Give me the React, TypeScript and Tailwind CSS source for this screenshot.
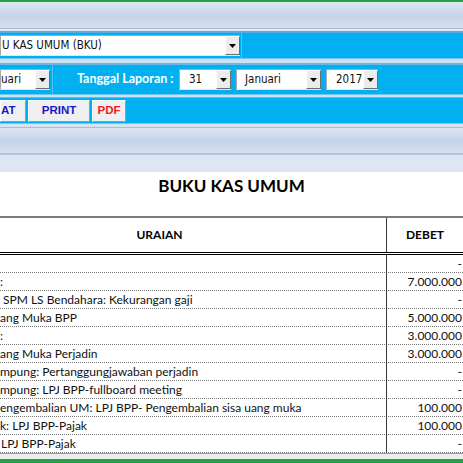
import React from "react";

const uiFont = { fontFamily: '"DejaVu Sans Condensed", "DejaVu Sans", sans-serif' };
const calFont = { fontFamily: 'Lato, "Open Sans", sans-serif' };

function Arrow() {
  return (
    <svg width="7" height="4" viewBox="0 0 7 4">
      <polygon points="0,0 7,0 3.5,4" fill="#000" />
    </svg>
  );
}

function Combo({ className, text, textClass }: { className: string; text: string; textClass?: string }) {
  return (
    <div className={`flex h-[21px] bg-white border-t border-l border-[#a9a9a9] border-b border-b-[#e6e6e6] ${className}`}>
      <div className={`flex-1 min-w-0 flex items-center whitespace-nowrap text-[11.5px] text-[#111] ${textClass ?? ""}`} style={uiFont}>
        {text}
      </div>
      <div className="w-[15px] shrink-0 h-full flex items-center justify-center bg-[#ececec] border-t border-l border-white border-r border-b border-r-[#6e6e6e] border-b-[#6e6e6e]">
        <Arrow />
      </div>
    </div>
  );
}

function Btn({ className, children, textClass }: { className: string; children: React.ReactNode; textClass: string }) {
  return (
    <div className={`h-[22px] flex items-center bg-[#efefef] border-t border-l border-[#fdfdfd] border-r border-b border-r-[#9a9a9a] border-b-[#9a9a9a] ${className}`}>
      <span className={`font-bold text-[11.5px] ${textClass}`} style={{ fontFamily: '"Liberation Sans", Arial, sans-serif' }}>
        {children}
      </span>
    </div>
  );
}

const rows: [string, string, string?][] = [
  ["", "-"],
  [":", "7.000.000"],
  ["SPM LS Bendahara: Kekurangan gaji", "-", "pl-[3px]"],
  ["ang Muka BPP", "5.000.000"],
  [":", "3.000.000"],
  ["ang Muka Perjadin", "3.000.000"],
  ["mpung: Pertanggungjawaban perjadin", "-"],
  ["mpung: LPJ BPP-fullboard meeting", "-"],
  ["engembalian UM: LPJ BPP- Pengembalian sisa uang muka", "100.000"],
  ["k: LPJ BPP-Pajak", "100.000"],
  ["LPJ BPP-Pajak", "-", "pl-[1px]"],
];

export default function App() {
  return (
    <div className="w-[463px] h-[463px] overflow-hidden bg-white flex flex-col">
      {/* top chrome */}
      <div className="h-[2px] bg-[#23a04a]" />
      <div className="h-[1px] bg-[#e4eee6]" />
      <div className="h-[25px] bg-linear-to-b from-[#dde4f1] via-[#c6d3ea] to-[#d6dfef]" />
      <div className="h-[1px] bg-[#a8bad6]" />
      <div className="h-[2px] bg-[#e2e9f5]" />
      <div className="h-[2px] bg-[#5aaade]" />

      {/* band 1 */}
      <div className="h-[25px] bg-[#00b0f0] flex items-center">
        <Combo className="w-[240px]" text="U KAS UMUM (BKU)" textClass="pl-[1px]" />
        <div className="ml-[1px] w-[1px] h-full bg-[#4cc6f5]" />
      </div>
      <div className="h-[1px] bg-[#70c4ee]" />
      <div className="h-[4px] bg-[#cfe2f3]" />
      <div className="h-[2px] bg-[#6db7e6]" />

      {/* band 2 */}
      <div className="h-[29px] bg-[#00b0f0] flex items-center">
        <Combo className="w-[50px]" text="uari" />
        <div className="ml-[2px] w-[1px] h-full bg-[#4cc6f5]" />
        <div className="ml-[24px] w-[102px] text-white font-bold text-[12.5px] whitespace-nowrap" style={calFont}>
          Tanggal Laporan :
        </div>
        <Combo className="w-[52px]" text="31" textClass="pl-[9px]" />
        <Combo className="ml-[5px] w-[85px]" text="Januari" textClass="pl-[8px]" />
        <Combo className="ml-[5px] w-[52px]" text="2017" textClass="pl-[9px]" />
      </div>
      <div className="h-[1px] bg-[#70c4ee]" />
      <div className="h-[2px] bg-[#cfe2f3]" />
      <div className="h-[1px] bg-[#6db7e6]" />

      {/* band 3 */}
      <div className="h-[25px] bg-[#00b0f0] flex items-center">
        <Btn className="w-[26px] justify-start" textClass="text-[#1818c8]">AT</Btn>
        <Btn className="ml-[2px] w-[62px] justify-center" textClass="text-[#1818c8]">PRINT</Btn>
        <Btn className="ml-[2px] w-[34px] justify-center" textClass="text-[#ec1c24]">PDF</Btn>
      </div>
      <div className="h-[1px] bg-[#78c6ee]" />
      <div className="h-[3px] bg-[#d8e4f2]" />
      <div className="h-[1px] bg-[#a9bcd8]" />

      {/* gray band */}
      <div className="h-[25px] bg-linear-to-b from-[#dde4f1] via-[#c6d3ea] to-[#d6dfef]" />
      <div className="h-[2px] bg-[#b3c3dc]" />
      <div className="h-[17px] bg-[#dde6f2]" />

      {/* title */}
      <div className="h-[44px] flex items-center justify-center pb-[17px]">
        <span className="font-bold text-[17px] leading-[20px] text-black" style={calFont}>
          BUKU KAS UMUM
        </span>
      </div>

      {/* table */}
      <div className="flex-1 flex flex-col" style={calFont}>
        <div className="h-[2px] bg-[#7c7c7c]" />
        <div className="h-[37px] grid grid-cols-[387px_1fr] border-b-[3px] border-double border-black">
          <div className="border-r border-[#3a3a3a] flex items-center justify-center pr-[67px] font-bold text-[12px] text-black">
            URAIAN
          </div>
          <div className="flex items-center justify-center font-bold text-[12px] text-black">DEBET</div>
        </div>
        {rows.map(([u, d, pad], i) => (
          <div key={i} className="h-[18px] grid grid-cols-[387px_1fr] border-b border-dotted border-[#777]">
            <div className={`border-r border-[#3a3a3a] flex items-center overflow-hidden whitespace-nowrap text-[12px] text-[#111] ${pad ?? ""}`}>
              {u}
            </div>
            <div className="flex items-center justify-end pr-[1px] text-[12px] text-[#111] whitespace-nowrap">{d}</div>
          </div>
        ))}
        <div className="h-[1px] bg-[#9a9a9a]" />
        <div className="h-[5px] bg-[#eceeee]" />
        <div className="flex-1 bg-[#23a04a]" />
      </div>
    </div>
  );
}
